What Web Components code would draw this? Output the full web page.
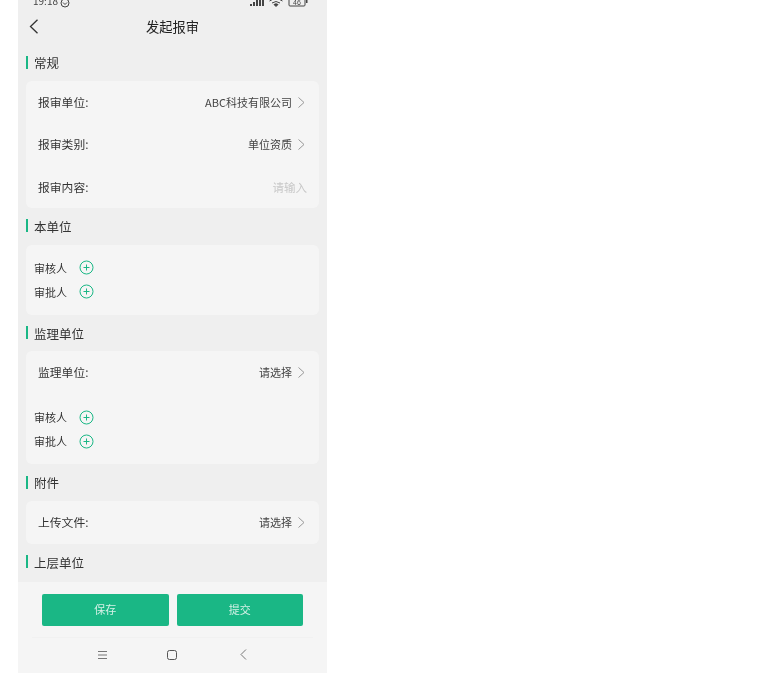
<!DOCTYPE html>
<html lang="zh">
<head>
<meta charset="utf-8">
<title>发起报审</title>
<style>
  html, body { margin: 0; height: 100%; background: #fff; overflow: hidden; }
  body { padding-left: 18px; font-family: "Noto Sans CJK SC", "Noto Sans", sans-serif; color: #333; }
</style>
</head>
<body>
<report-app>
  <status-bar slot="top"></status-bar>
  <title-bar slot="top">发起报审</title-bar>

  <form-section title="常规">
    <form-card>
      <picker-row label="报审单位:" value="ABC科技有限公司"></picker-row>
      <picker-row label="报审类别:" value="单位资质"></picker-row>
      <picker-row label="报审内容:" value="请输入" placeholder></picker-row>
    </form-card>
  </form-section>

  <form-section title="本单位">
    <form-card>
      <person-list></person-list>
    </form-card>
  </form-section>

  <form-section title="监理单位" style="--head-gap: 3px">
    <form-card>
      <picker-row label="监理单位:" value="请选择"></picker-row>
      <person-list style="--list-top: 14px"></person-list>
    </form-card>
  </form-section>

  <form-section title="附件">
    <form-card>
      <picker-row label="上传文件:" value="请选择"></picker-row>
    </form-card>
  </form-section>

  <form-section title="上层单位"></form-section>

  <action-bar slot="bottom"></action-bar>
  <nav-keys slot="bottom"></nav-keys>
</report-app>

<script>
const CHEVRON = `<svg width="9" height="13" viewBox="0 0 9 13" fill="none" stroke="currentColor" stroke-width="1"><path d="M1.5 1.5 L7 6.5 L1.5 11.5"/></svg>`;

class ReportApp extends HTMLElement {
  constructor() {
    super();
    this.attachShadow({ mode: 'open' }).innerHTML = `
      <style>
        :host { display: flex; flex-direction: column; width: 309px; height: 673px; background: #efefef; overflow: hidden; filter: blur(0.3px); }
        .top { flex: none; }
        .scroll { flex: none; height: 535px; overflow: hidden; }
        .bottom { flex: none; height: 91px; background: #f5f5f5; }
      </style>
      <div class="top"><slot name="top"></slot></div>
      <div class="scroll"><slot></slot></div>
      <div class="bottom"><slot name="bottom"></slot></div>`;
  }
}

class StatusBar extends HTMLElement {
  constructor() {
    super();
    this.attachShadow({ mode: 'open' }).innerHTML = `
      <style>
        :host { display: flex; justify-content: space-between; align-items: flex-end; height: 8px; padding: 0 19px 0 15px; font-size: 10px; line-height: 14px; color: #444; }
        .left, .right { display: flex; align-items: flex-end; gap: 4px; height: 8px; }
        .right { margin-bottom: 1px; }
      </style>
      <div class="left">
        <span class="time">19:18</span>
        <svg width="10" height="10" viewBox="0 0 10 10" fill="none" stroke="#444" style="margin-left:-2px"><circle cx="5" cy="5" r="4"/><path d="M3 4.5 L5 6.5 L7 4.5"/></svg>
      </div>
      <div class="right">
        <svg width="14" height="8" viewBox="0 0 14 8" fill="#444"><rect x="0" y="5" width="2" height="2"/><rect x="3" y="3" width="2" height="4"/><rect x="6" y="1" width="2" height="6"/><rect x="9" y="0" width="2" height="7"/><rect x="12" y="0" width="2" height="7"/></svg>
        <svg width="14" height="8" viewBox="0 0 14 8" fill="none" stroke="#444" style="margin-left:1px"><path d="M0.5 2 Q7 -2.500 13.500 2"/><path d="M3 4 Q7 1 11 4"/><path d="M5 5.500 L7 7.500 L9 5.500 Q7 4 5 5.500Z" fill="#444"/></svg>
        <svg width="20" height="8" viewBox="0 0 20 8" fill="none" stroke="#444" style="margin-left:1px"><path d="M1 -2 H17 V6 Q17 7 16 7 H2 Q1 7 1 6Z"/><rect x="18" y="1" width="1.5" height="3" fill="#444" stroke="none"/><text x="9" y="5.500" font-size="7" fill="#444" stroke="none" text-anchor="middle" font-family="Liberation Sans">46</text></svg>
      </div>`;
  }
}

class TitleBar extends HTMLElement {
  constructor() {
    super();
    this.attachShadow({ mode: 'open' }).innerHTML = `
      <style>
        :host { display: grid; grid-template-columns: 1fr auto 1fr; align-items: center; height: 39px; padding: 0 0 0 11px; font-size: 13.25px; color: #222; }
        svg { display: block; color: #333; margin-bottom: 2px; }
        .title { margin-right: 11px; margin-bottom: 2px; }
      </style>
      <svg width="10" height="15" viewBox="0 0 10 15" fill="none" stroke="currentColor" stroke-width="1.3"><path d="M8.5 0.7 L1.5 7.5 L8.5 14.3"/></svg>
      <span class="title"><slot></slot></span>
      <span></span>`;
  }
}

class FormSection extends HTMLElement {
  constructor() {
    super();
    this.attachShadow({ mode: 'open' }).innerHTML = `
      <style>
        :host { display: block; padding: 0 8px 3px; }
        .head { display: flex; align-items: center; gap: 6px; height: 30px; margin-bottom: var(--head-gap, 4px); font-size: 12.5px; color: #333; }
        .bar { width: 2px; height: 13px; background: #1ab785; }
        .name { padding-top: 1px; }
      </style>
      <div class="head"><span class="bar"></span><span class="name"></span></div>
      <slot></slot>`;
    this.shadowRoot.querySelector('.name').textContent = this.getAttribute('title');
    this.removeAttribute('title');
  }
}

class FormCard extends HTMLElement {
  constructor() {
    super();
    this.attachShadow({ mode: 'open' }).innerHTML = `
      <style>
        :host { display: block; background: #f5f5f5; border-radius: 6px; overflow: hidden; }
      </style>
      <slot></slot>`;
  }
}

class PickerRow extends HTMLElement {
  constructor() {
    super();
    const placeholder = this.hasAttribute('placeholder');
    this.attachShadow({ mode: 'open' }).innerHTML = `
      <style>
        :host { display: flex; align-items: center; justify-content: space-between; height: 42.33px; padding: 0 13px 0 12px; font-size: 11.8px; color: #333; }
        .label { margin-bottom: 1px; }
        .right { display: flex; align-items: center; gap: 5px; font-size: 11px; color: #444; }
        .right.ph { color: #c8c8c8; margin-right: -1px; font-size: 11.5px; }
        svg { display: block; color: #999; }
      </style>
      <span class="label"></span>
      <span class="right${placeholder ? ' ph' : ''}"><span class="value"></span>${placeholder ? '' : CHEVRON}</span>`;
    this.shadowRoot.querySelector('.label').textContent = this.getAttribute('label');
    this.shadowRoot.querySelector('.value').textContent = this.getAttribute('value');
  }
}

class PersonList extends HTMLElement {
  constructor() {
    super();
    const row = name => `
      <div class="row"><span>${name}</span>
        <svg width="15" height="15" viewBox="0 0 15 15" fill="none" stroke="#1ab785" stroke-width="1"><circle cx="7.5" cy="7.5" r="6.5"/><path d="M4.5 7.5 H10.5 M7.5 4.5 V10.5"/></svg>
      </div>`;
    this.attachShadow({ mode: 'open' }).innerHTML = `
      <style>
        :host { display: flex; flex-direction: column; gap: 4px; padding: var(--list-top, 13px) 8px 13px; font-size: 11px; color: #333; }
        .row { display: flex; align-items: center; gap: 12px; height: 20px; }
        svg { display: block; }
      </style>
      ${row('审核人')}${row('审批人')}`;
  }
}

class ActionBar extends HTMLElement {
  constructor() {
    super();
    this.attachShadow({ mode: 'open' }).innerHTML = `
      <style>
        :host { display: flex; gap: 8px; padding: 12px 24px 0; height: 32px; }
        button { flex: 1; height: 32px; border: 0; border-radius: 2px; background: #1ab785; color: #d6f1e7; font: inherit; font-size: 11px; padding: 0 0 2px; }
      </style>
      <button>保存</button><button>提交</button>`;
  }
}

class NavKeys extends HTMLElement {
  constructor() {
    super();
    this.attachShadow({ mode: 'open' }).innerHTML = `
      <style>
        :host { display: flex; align-items: center; height: 36px; margin: 11px 14px 0; padding: 0 0 2px 66px; border-top: 1px solid #f1f1f1; box-sizing: border-box; color: #777; }
        svg { display: block; flex: none; }
        .home { margin-left: 60px; }
        .back { margin-left: 63px; }
      </style>
      <svg width="9" height="10" viewBox="0 0 9 10" fill="none" stroke="currentColor"><path d="M0 1.5 H9 M0 5 H9 M0 8.5 H9"/></svg>
      <svg class="home" width="10" height="10" viewBox="0 0 10 10" fill="none" stroke="#555"><rect x="0.5" y="0.5" width="9" height="9" rx="2"/></svg>
      <svg class="back" width="7" height="11" viewBox="0 0 7 11" fill="none" stroke="currentColor"><path d="M6 0.5 L1 5.5 L6 10.5"/></svg>`;
  }
}

customElements.define('report-app', ReportApp);
customElements.define('status-bar', StatusBar);
customElements.define('title-bar', TitleBar);
customElements.define('form-section', FormSection);
customElements.define('form-card', FormCard);
customElements.define('picker-row', PickerRow);
customElements.define('person-list', PersonList);
customElements.define('action-bar', ActionBar);
customElements.define('nav-keys', NavKeys);
</script>
</body>
</html>
